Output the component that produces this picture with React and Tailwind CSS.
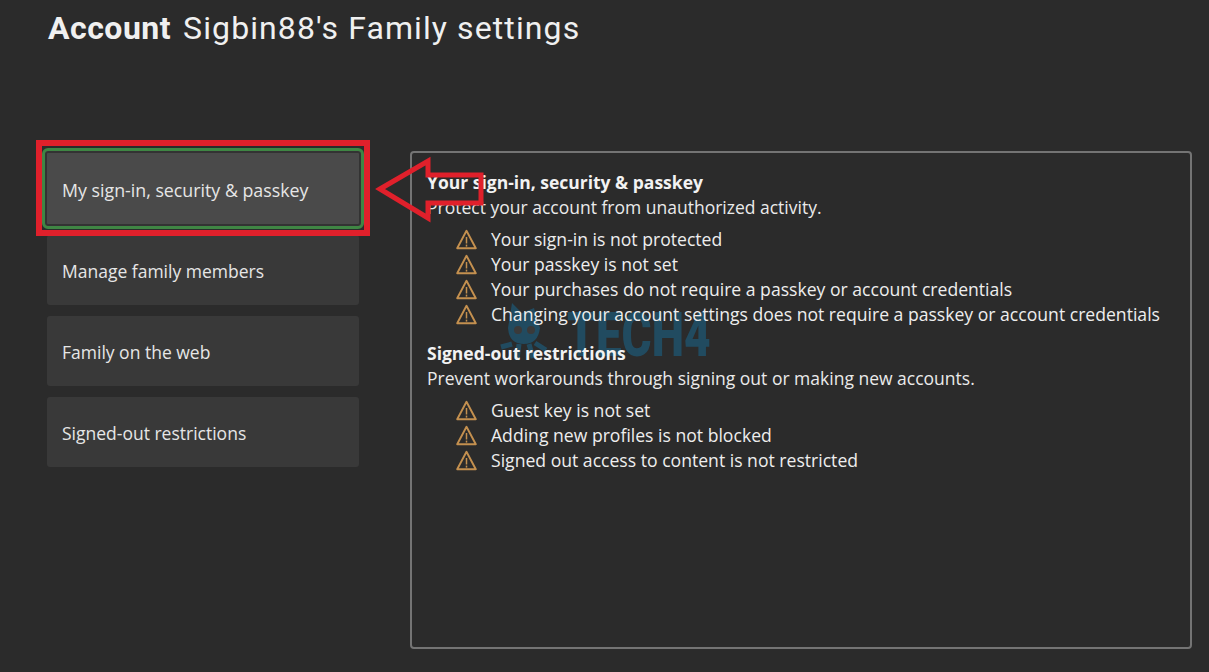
const warn1 = ["Your sign-in is not protected","Your passkey is not set","Your purchases do not require a passkey or account credentials","Changing your account settings does not require a passkey or account credentials"];
const warn2 = ["Guest key is not set","Adding new profiles is not blocked","Signed out access to content is not restricted"];

function Warn() {
  return (
    <svg width="21" height="21" viewBox="0 0 21 21" fill="none" className="shrink-0">
      <path d="M10.5 1.8 L19.8 19.2 H1.2 Z" stroke="#c4904f" strokeWidth="1.9" strokeLinejoin="round" />
      <path d="M10.5 8 V14.5" stroke="#c4904f" strokeWidth="1.5" />
      <path d="M10.5 15.6 V17.6" stroke="#c4904f" strokeWidth="1.5" />
    </svg>
  );
}

function WarnList({ items }) {
  return (
    <div className="flex flex-col pl-[29px] mt-[7px]">
      {items.map((t) => (
        <div key={t} className="flex items-center h-[25px] gap-[14px] text-[17.6px] text-[#eeeeee]">
          <Warn />
          <span className="whitespace-nowrap">{t}</span>
        </div>
      ))}
    </div>
  );
}

function MenuItem({ label, selected }) {
  return (
    <div className={selected
      ? "h-[81px] flex items-center pl-[17px] pt-[3px] -mt-[3px] -mb-[5px] -mx-[5px] rounded-[6px] bg-[#4a4a4a] border-[3px] border-[#3f8644] text-[17.8px] text-[#e6e6e6] shadow-[inset_0_0_0_2px_#333]"
      : "h-[70px] flex items-center pl-[15px] pt-[2px] rounded-[3px] bg-[#393939] text-[17.5px] text-[#e6e6e6]"}>
      {label}
    </div>
  );
}

export default function App() {
  return (
    <div className="relative w-[1209px] h-[672px] overflow-hidden bg-[#2b2b2b]" style={{ fontFamily: '"Open Sans", "Noto Sans", sans-serif' }}>
      <div className="absolute left-[567px] top-[302px] w-[146px] text-[62px] leading-[66px] font-black text-[#214b60] origin-left scale-x-[0.74] pointer-events-none whitespace-nowrap" style={{ fontFamily: 'Roboto, sans-serif' }}>TECH4</div>
      <svg className="absolute left-[500px] top-[300px] pointer-events-none" width="48" height="66" viewBox="0 0 48 66">
        <path d="M12 3 L22 13 L34 8 L40 28 Q38 44 24 44 Q9 44 8 28 Z" fill="#214b60" />
        <circle cx="18" cy="30" r="4" fill="#3a3a3a" />
        <circle cx="31" cy="30" r="4" fill="#3a3a3a" />
        <path d="M12 44 L1 47 M35 43 L46 50 M19 44 L17 60 M29 44 L33 58" stroke="#214b60" strokeWidth="5" />
      </svg>

      <div className="relative">
        <div className="pl-[48px] pt-[8px] h-[151px] flex items-start gap-[12px] text-[32px] leading-[40px] text-[#f0f0f0]" style={{ fontFamily: 'Roboto, sans-serif' }}>
          <span className="font-bold tracking-[0.5px]">Account</span>
          <span className="font-normal tracking-[1.1px]">Sigbin88's Family settings</span>
        </div>

        <div className="flex pl-[47px] items-start">
          <div className="w-[312px] flex flex-col gap-[11px] shrink-0">
            <MenuItem label="My sign-in, security & passkey" selected />
            <MenuItem label="Manage family members" />
            <MenuItem label="Family on the web" />
            <MenuItem label="Signed-out restrictions" />
          </div>

          <div className="ml-[51px] w-[782px] h-[498px] rounded-[4px] border-2 border-[#747474] pl-[15px] pt-[17px]">
            <div className="text-[17.5px] leading-[25px] font-bold text-[#f2f2f2]">Your sign-in, security & passkey</div>
            <div className="text-[17.5px] leading-[25px] text-[#eaeaea]">Protect your account from unauthorized activity.</div>
            <WarnList items={warn1} />
            <div className="mt-[14px] text-[17.5px] leading-[25px] font-bold text-[#f2f2f2]">Signed-out restrictions</div>
            <div className="text-[17.5px] leading-[25px] text-[#eaeaea]">Prevent workarounds through signing out or making new accounts.</div>
            <WarnList items={warn2} />
          </div>
        </div>
      </div>

      <div className="absolute left-[36px] top-[140px] w-[334px] h-[96px] border-[6px] border-[#e0202b] pointer-events-none" />

      <svg className="absolute left-[370px] top-[153px] pointer-events-none" width="118" height="72" viewBox="0 0 118 72" fill="none">
        <path d="M10 36 L58 8 V22 H111 V50 H58 V65 Z" stroke="#e0202b" strokeWidth="5" strokeLinejoin="miter" />
      </svg>
    </div>
  );
}
